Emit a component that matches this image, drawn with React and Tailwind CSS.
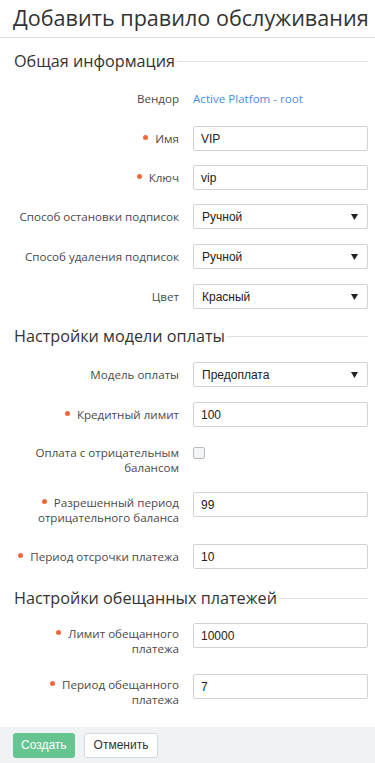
import React from "react";

const OS = { fontFamily: '"Open Sans", "Noto Sans", sans-serif' };
const AR = { fontFamily: '"Liberation Sans", Arial, sans-serif' };

function Dot() {
  return <span className="inline-block w-[5px] h-[5px] rounded-full bg-[#f2683a] mr-[7px] align-middle relative top-[-2px]" />;
}

function Row({ label, required, two, className = "", children }) {
  return (
    <div className={`flex ${two ? "items-start" : "items-center"} ${className}`}>
      <div
        className={`w-[166px] shrink-0 text-right text-[11.6px] leading-[15px] text-[#4a4a4a] ${two ? "pt-[3px]" : ""}`}
        style={OS}
      >
        {required && <Dot />}
        {label}
      </div>
      <div className="ml-[14px] flex-1">{children}</div>
    </div>
  );
}

function Input({ value }) {
  return (
    <div
      className="h-[25px] border border-[#cfd3d7] rounded-[2px] bg-white flex items-center px-[7px] text-[12px] text-[#222]"
      style={AR}
    >
      {value}
    </div>
  );
}

function Select({ value }) {
  return (
    <div
      className="h-[25px] border border-[#cfd3d7] rounded-[2px] bg-white flex items-center justify-between pl-[8px] pr-[9px] text-[12px] text-[#222]"
      style={AR}
    >
      <span>{value}</span>
      <svg width="7" height="6" viewBox="0 0 7 6">
        <polygon points="0,0 7,0 3.5,6" fill="#222" />
      </svg>
    </div>
  );
}

function Section({ title, className = "" }) {
  return (
    <div className={`flex items-center ${className}`}>
      <div className="text-[16.2px] leading-[22px] text-[#333] whitespace-nowrap" style={OS}>
        {title}
      </div>
      <div className="flex-1 h-px bg-[#dde1e5] ml-[2px]" />
    </div>
  );
}

export default function App() {
  return (
    <div className="w-[375px] h-[763px] bg-white flex flex-col overflow-hidden">
      <div className="h-[38px] border-b border-[#dcdfe3] pl-[13px] flex items-end">
        <div className="text-[21.6px] leading-[30px] text-[#333] pb-[4px] whitespace-nowrap" style={OS}>
          Добавить правило обслуживания
        </div>
      </div>
      <div className="flex-1 pl-[13px] pr-[7px]">
        <Section title="Общая информация" className="mt-[12px] pl-[1px]" />
        <div className="flex items-center mt-[17px] h-[20px]">
          <div className="w-[166px] shrink-0 text-right text-[11.6px] text-[#4a4a4a]" style={OS}>
            Вендор
          </div>
          <div className="ml-[14px] text-[11.6px] text-[#4a8fd9]" style={OS}>
            Active Platfom - root
          </div>
        </div>
        <Row label="Имя" required className="mt-[17px]">
          <Input value="VIP" />
        </Row>
        <Row label="Ключ" required className="mt-[14px]">
          <Input value="vip" />
        </Row>
        <Row label="Способ остановки подписок" className="mt-[14px]">
          <Select value="Ручной" />
        </Row>
        <Row label="Способ удаления подписок" className="mt-[15px]">
          <Select value="Ручной" />
        </Row>
        <Row label="Цвет" className="mt-[15px]">
          <Select value="Красный" />
        </Row>

        <Section title="Настройки модели оплаты" className="mt-[16px] pl-[1px]" />
        <Row label="Модель оплаты" className="mt-[15px]">
          <Select value="Предоплата" />
        </Row>
        <Row label="Кредитный лимит" required className="mt-[15px]">
          <Input value="100" />
        </Row>
        <Row label={<>Оплата с отрицательным<br />балансом</>} two className="mt-[15px]">
          <div className="pt-[5px]">
            <div className="w-[12px] h-[12px] border border-[#b8bcc0] rounded-[2px] bg-[#f4f5f6]" />
          </div>
        </Row>
        <Row label={<>Разрешенный период<br />отрицательного баланса</>} required two className="mt-[17px]">
          <Input value="99" />
        </Row>
        <Row label="Период отсрочки платежа" required className="mt-[19px]">
          <Input value="10" />
        </Row>

        <Section title="Настройки обещанных платежей" className="mt-[18px] pl-[1px]" />
        <Row label={<>Лимит обещанного<br />платежа</>} required two className="mt-[14px]">
          <Input value="10000" />
        </Row>
        <Row label={<>Период обещанного<br />платежа</>} required two className="mt-[18px]">
          <Input value="7" />
        </Row>
      </div>
      <div className="h-[36px] bg-[#f0f3f5] flex items-center pl-[13px] gap-[9px]">
        <div
          className="h-[25px] px-[8px] rounded-[3px] bg-[#66c491] text-white text-[12px] flex items-center"
          style={AR}
        >
          Создать
        </div>
        <div
          className="h-[25px] px-[9px] rounded-[3px] bg-white border border-[#d5d9dd] text-[#333] text-[12px] flex items-center"
          style={AR}
        >
          Отменить
        </div>
      </div>
    </div>
  );
}
